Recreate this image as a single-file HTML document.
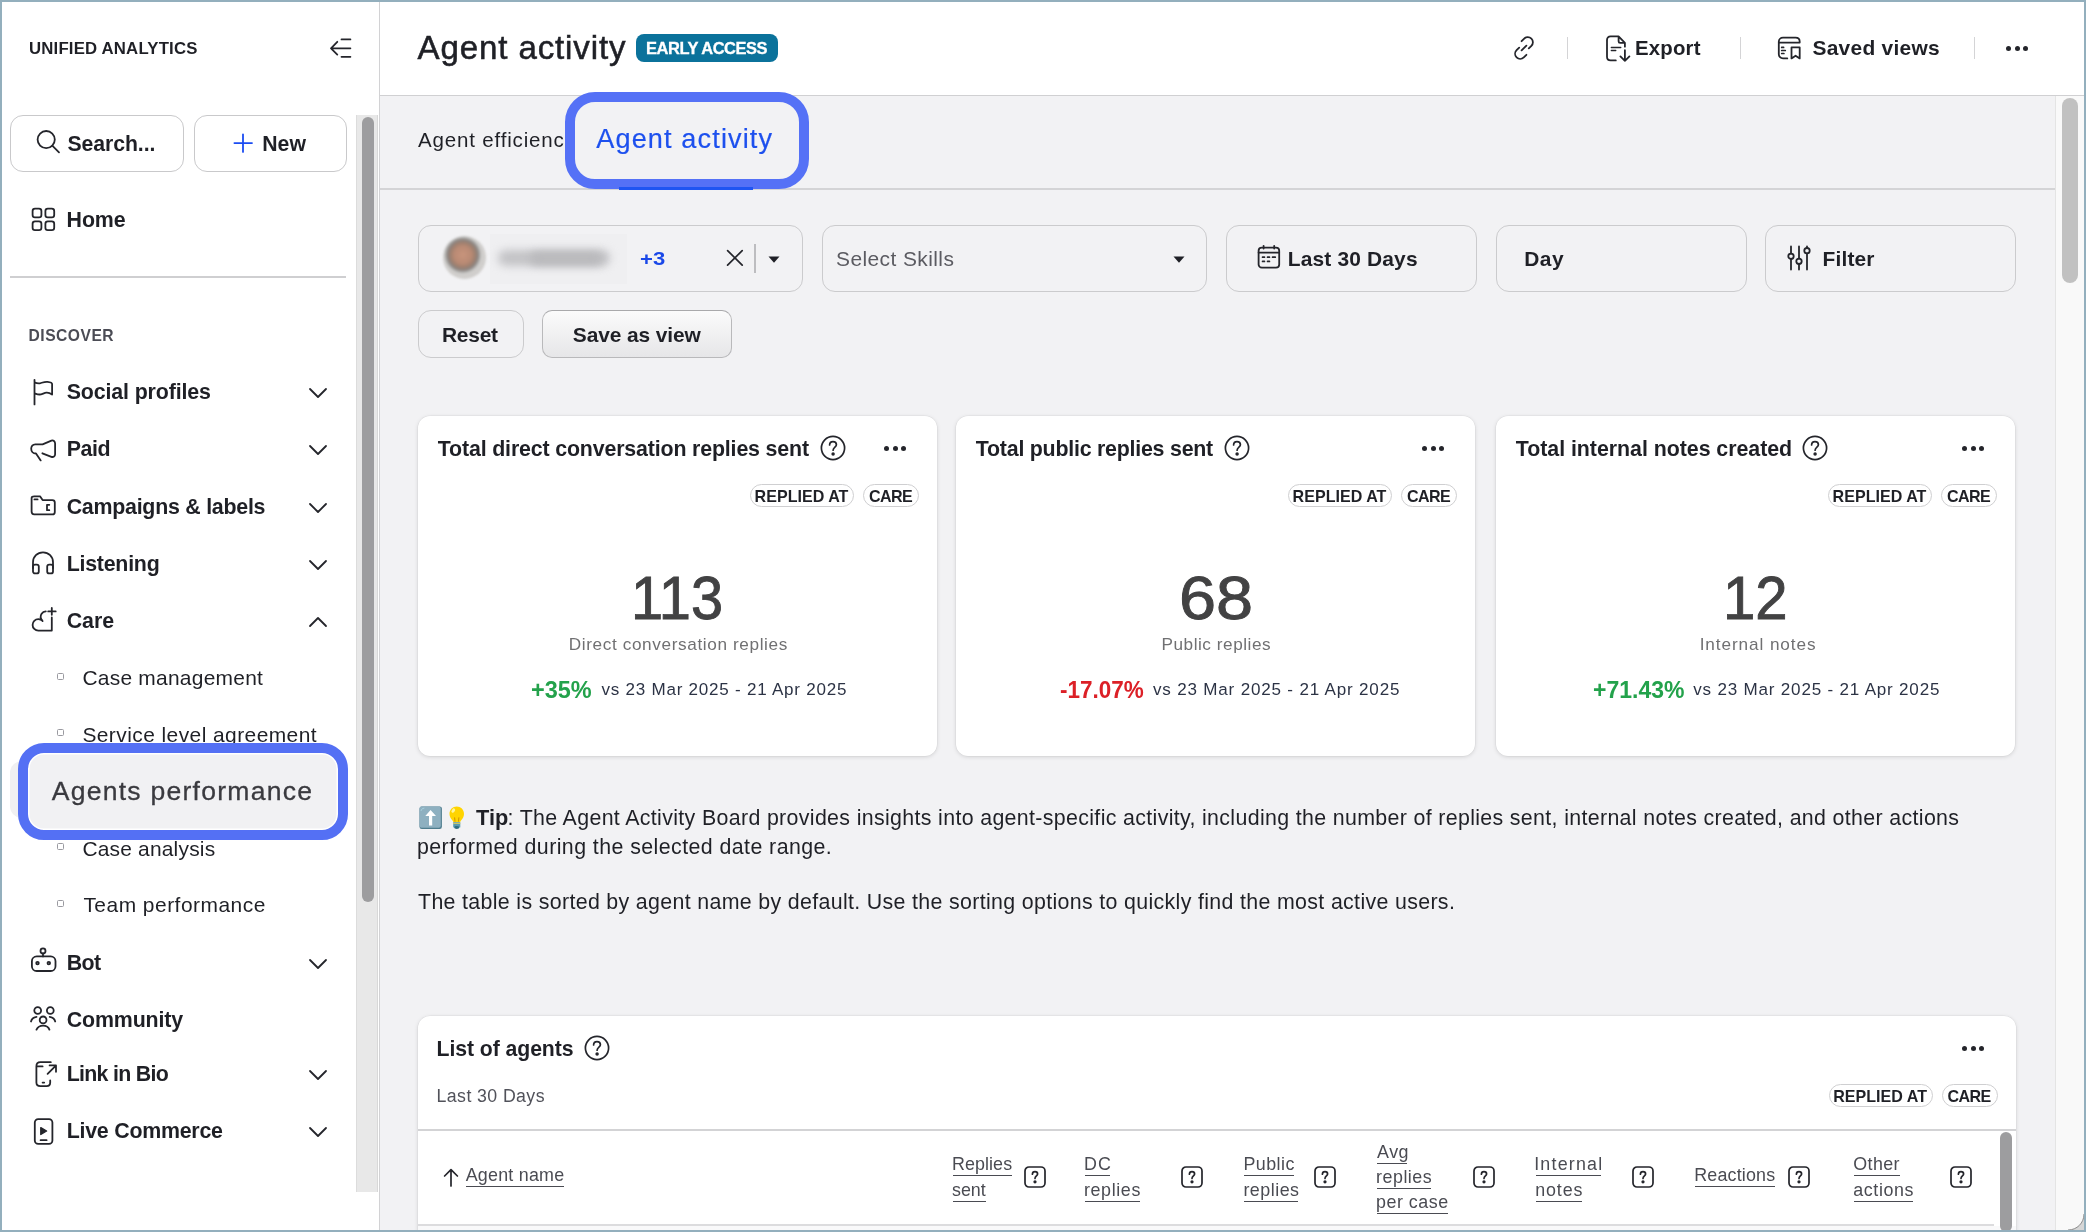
<!DOCTYPE html>
<html><head><meta charset="utf-8"><title>Agent activity</title>
<style>
html,body{margin:0;padding:0;width:2086px;height:1232px;overflow:hidden;background:#f2f2f4}
body{position:relative;font-family:"Liberation Sans", sans-serif}
.t{position:absolute;white-space:nowrap;font-family:"Liberation Sans", sans-serif}
.r{position:absolute;display:block}
</style></head><body><div style="position:absolute;left:0;top:0;width:2086px;height:1232px;will-change:transform">
<div class="r" style="left:0px;top:0px;width:2086px;height:1232px;background:#f2f2f4"></div>
<div class="r" style="left:2px;top:2px;width:377px;height:1228px;background:#fff"></div>
<div class="r" style="left:379px;top:2px;width:1px;height:1228px;background:#d2d2d4"></div>
<div class="r" style="left:380px;top:2px;width:1704px;height:93px;background:#fff"></div>
<div class="r" style="left:380px;top:95px;width:1704px;height:1px;background:#d0d0d2"></div>
<div class="r" style="left:380px;top:188px;width:1675px;height:1.5px;background:#d4d4d6"></div>
<div class="r" style="left:2055px;top:96px;width:29px;height:1134px;background:#f9f9f9;border-left:1px solid #e4e4e4"></div>
<div class="r" style="left:2062px;top:98px;width:16px;height:185px;background:#c1c1c1;border-radius:8px"></div>
<div id="s_title" class="t" style="left:29.00px;top:41.00px;font-size:16.76px;line-height:16.76px;font-weight:700;color:#1f2026;letter-spacing:0.188px;">UNIFIED ANALYTICS</div>
<svg class="r" style="left:328px;top:36px;" width="26" height="24" viewBox="0 0 26 24" fill="none" stroke="#24252b" stroke-width="1.8" stroke-linecap="round" stroke-linejoin="round"><path d="M3 12.3 L9.3 5.8 M3 12.3 L9.3 18.6 M3 12.3 H22.4 M13.5 3.4 H22.4 M13.5 20.8 H22.4"/></svg>
<div class="r" style="left:10px;top:115px;width:174px;height:57px;border:1.5px solid #c9c9cb;border-radius:13px;box-sizing:border-box;background:#fff"></div>
<div class="r" style="left:194px;top:115px;width:153px;height:57px;border:1.5px solid #c9c9cb;border-radius:13px;box-sizing:border-box;background:#fff"></div>
<svg class="r" style="left:34px;top:128px;" width="30" height="28" viewBox="0 0 30 28" fill="none" stroke="#24252b" stroke-width="1.8" stroke-linecap="round" stroke-linejoin="round"><circle cx="12.2" cy="11.6" r="8.6"/><path d="M18.3 17.7 L25 24.3"/></svg>
<div id="s_search" class="t" style="left:67.50px;top:133.00px;font-size:21.23px;line-height:21.23px;font-weight:700;color:#1f2026;letter-spacing:-0.075px;">Search...</div>
<svg class="r" style="left:232px;top:132px;stroke:#1b4cf2;" width="22" height="22" viewBox="0 0 22 22" fill="none" stroke="#24252b" stroke-width="1.8" stroke-linecap="round" stroke-linejoin="round"><path d="M11 2.3 V19.9 M2.4 11.1 H20"/></svg>
<div id="s_new" class="t" style="left:262.20px;top:133.00px;font-size:21.23px;line-height:21.23px;font-weight:700;color:#1f2026;letter-spacing:0.100px;">New</div>
<div class="r" style="left:356px;top:115px;width:22px;height:1077px;background:#e8e8e8;border-left:1px solid #dcdcdc;border-right:1px solid #d8d8d8;box-sizing:border-box"></div>
<div class="r" style="left:362px;top:117px;width:12px;height:785px;background:#9d9d9f;border-radius:6px"></div>
<svg class="r" style="left:30px;top:206px;" width="26" height="26" viewBox="0 0 26 26" fill="none" stroke="#24252b" stroke-width="1.8" stroke-linecap="round" stroke-linejoin="round"><rect x="2.6" y="2.6" width="8.8" height="8.8" rx="2.4"/><rect x="15.4" y="2.6" width="8.8" height="8.8" rx="2.4"/><rect x="2.6" y="15.4" width="8.8" height="8.8" rx="2.4"/><rect x="15.4" y="15.4" width="8.8" height="8.8" rx="2.4"/></svg>
<div id="s_home" class="t" style="left:66.60px;top:210.00px;font-size:21.37px;line-height:21.37px;font-weight:700;color:#1f2026;letter-spacing:-0.133px;">Home</div>
<div class="r" style="left:10px;top:276px;width:336px;height:2px;background:#cfcfd1"></div>
<div id="s_disc" class="t" style="left:28.50px;top:328.00px;font-size:15.64px;line-height:15.64px;font-weight:700;color:#4b4c55;letter-spacing:0.500px;">DISCOVER</div>
<div id="s_social" class="t" style="left:66.70px;top:382.00px;font-size:21.37px;line-height:21.37px;font-weight:700;color:#1f2026;letter-spacing:-0.129px;">Social profiles</div>
<svg class="r" style="left:306px;top:383px;" width="24" height="20" viewBox="0 0 24 20" fill="none" stroke="#24252b" stroke-width="1.8" stroke-linecap="round" stroke-linejoin="round"><path d="M4 6 L12 14 L20 6"/></svg>
<div id="s_paid" class="t" style="left:66.70px;top:439.00px;font-size:21.37px;line-height:21.37px;font-weight:700;color:#1f2026;letter-spacing:-0.433px;">Paid</div>
<svg class="r" style="left:306px;top:440.4px;" width="24" height="20" viewBox="0 0 24 20" fill="none" stroke="#24252b" stroke-width="1.8" stroke-linecap="round" stroke-linejoin="round"><path d="M4 6 L12 14 L20 6"/></svg>
<div id="s_camp" class="t" style="left:66.70px;top:497.00px;font-size:21.37px;line-height:21.37px;font-weight:700;color:#1f2026;letter-spacing:-0.247px;">Campaigns &amp; labels</div>
<svg class="r" style="left:306px;top:497.5px;" width="24" height="20" viewBox="0 0 24 20" fill="none" stroke="#24252b" stroke-width="1.8" stroke-linecap="round" stroke-linejoin="round"><path d="M4 6 L12 14 L20 6"/></svg>
<div id="s_listen" class="t" style="left:66.70px;top:554.00px;font-size:21.37px;line-height:21.37px;font-weight:700;color:#1f2026;letter-spacing:-0.238px;">Listening</div>
<svg class="r" style="left:306px;top:554.6px;" width="24" height="20" viewBox="0 0 24 20" fill="none" stroke="#24252b" stroke-width="1.8" stroke-linecap="round" stroke-linejoin="round"><path d="M4 6 L12 14 L20 6"/></svg>
<div id="s_care" class="t" style="left:66.70px;top:611.00px;font-size:21.37px;line-height:21.37px;font-weight:700;color:#1f2026;letter-spacing:0.000px;">Care</div>
<svg class="r" style="left:306px;top:611.7px;" width="24" height="20" viewBox="0 0 24 20" fill="none" stroke="#24252b" stroke-width="1.8" stroke-linecap="round" stroke-linejoin="round"><path d="M4 14 L12 6 L20 14"/></svg>
<div id="s_bot" class="t" style="left:66.70px;top:953.00px;font-size:21.37px;line-height:21.37px;font-weight:700;color:#1f2026;letter-spacing:-0.550px;">Bot</div>
<svg class="r" style="left:306px;top:953.8px;" width="24" height="20" viewBox="0 0 24 20" fill="none" stroke="#24252b" stroke-width="1.8" stroke-linecap="round" stroke-linejoin="round"><path d="M4 6 L12 14 L20 6"/></svg>
<div id="s_comm" class="t" style="left:66.70px;top:1010.00px;font-size:21.37px;line-height:21.37px;font-weight:700;color:#1f2026;letter-spacing:-0.125px;">Community</div>
<div id="s_link" class="t" style="left:66.70px;top:1064.00px;font-size:21.37px;line-height:21.37px;font-weight:700;color:#1f2026;letter-spacing:-0.700px;">Link in Bio</div>
<svg class="r" style="left:306px;top:1065.4px;" width="24" height="20" viewBox="0 0 24 20" fill="none" stroke="#24252b" stroke-width="1.8" stroke-linecap="round" stroke-linejoin="round"><path d="M4 6 L12 14 L20 6"/></svg>
<div id="s_live" class="t" style="left:66.70px;top:1121.00px;font-size:21.37px;line-height:21.37px;font-weight:700;color:#1f2026;letter-spacing:-0.233px;">Live Commerce</div>
<svg class="r" style="left:306px;top:1122px;" width="24" height="20" viewBox="0 0 24 20" fill="none" stroke="#24252b" stroke-width="1.8" stroke-linecap="round" stroke-linejoin="round"><path d="M4 6 L12 14 L20 6"/></svg>
<svg class="r" style="left:30px;top:377px;" width="26" height="30" viewBox="0 0 26 30" fill="none" stroke="#24252b" stroke-width="1.8" stroke-linecap="round" stroke-linejoin="round"><path d="M4.5 2.8 V27.4 M4.5 5.2 C6.5 6.2 8.5 6.6 10.5 6.1 C13 5.4 15 4.6 17.5 4.9 C20 5.2 22.1 5.8 22.1 7 V17.5 C20 16 18 15.5 16.5 15.6 C14 15.8 12 17.5 9.5 17.5 C7.5 17.5 6 16.8 4.5 16.3"/></svg>
<svg class="r" style="left:29px;top:437px;" width="28" height="26" viewBox="0 0 28 26" fill="none" stroke="#24252b" stroke-width="1.8" stroke-linecap="round" stroke-linejoin="round"><path d="M13.6 7.3 H6.3 C3.7 7.3 2.2 9.3 2.2 11.7 C2.2 14.2 4 16.5 7 16.5 L11.7 23.4 M13.4 16.3 L22.4 19.8 C24.4 20.5 26.1 19.3 26.1 17.2 V6.6 C26.1 4.4 24.4 3 22.4 3.6 L13.6 7.3"/></svg>
<svg class="r" style="left:29px;top:492px;" width="28" height="26" viewBox="0 0 28 26" fill="none" stroke="#24252b" stroke-width="1.8" stroke-linecap="round" stroke-linejoin="round"><path d="M2.6 6 V19.6 C2.6 21.3 3.6 22.4 5.2 22.4 H23.4 C24.9 22.4 25.8 21.4 25.8 19.9 V10.6 C25.8 9.1 24.9 8.1 23.4 8.1 H13.6 L11 4.3 H5.2 C3.6 4.3 2.6 5 2.6 6 Z M5.4 7.4 H8.6"/><path d="M20.3 12.8 H18 V18.2 H20.3"/></svg>
<svg class="r" style="left:30px;top:549px;" width="26" height="28" viewBox="0 0 26 28" fill="none" stroke="#24252b" stroke-width="1.8" stroke-linecap="round" stroke-linejoin="round"><path d="M3 19 V13.3 C3 7.6 7.4 3.4 13 3.4 C18.6 3.4 23 7.6 23 13.3 V19"/><rect x="3" y="15.6" width="5.8" height="8.8" rx="2"/><rect x="17.2" y="15.6" width="5.8" height="8.8" rx="2"/></svg>
<svg class="r" style="left:30px;top:600px;" width="28" height="34" viewBox="0 0 28 34" fill="none" stroke="#24252b" stroke-width="1.8" stroke-linecap="round" stroke-linejoin="round"><path d="M21.8 8 V14.8 M18.2 11.4 H25.7 M21.8 17.4 V30.6 H8.3 A5.7 5.7 0 0 1 8.3 19.2 C10 19.2 11.5 19.8 12.6 21 C10.6 19 10.2 16 11.6 13.8 C12.6 12.3 14 11.5 15.8 11.4"/></svg>
<div class="r" style="left:57px;top:673px;width:7px;height:7px;border:1px solid #9a9aa0;border-radius:1.5px;box-sizing:border-box"></div>
<div id="s_casem" class="t" style="left:82.40px;top:668.00px;font-size:20.95px;line-height:20.95px;font-weight:400;color:#1f2026;letter-spacing:0.257px;">Case management</div>
<div class="r" style="left:57px;top:729px;width:7px;height:7px;border:1px solid #9a9aa0;border-radius:1.5px;box-sizing:border-box"></div>
<div id="s_sla" class="t" style="left:82.40px;top:725.00px;font-size:20.95px;line-height:20.95px;font-weight:400;color:#1f2026;letter-spacing:0.436px;">Service level agreement</div>
<div class="r" style="left:57px;top:843px;width:7px;height:7px;border:1px solid #9a9aa0;border-radius:1.5px;box-sizing:border-box"></div>
<div id="s_casea" class="t" style="left:82.40px;top:839.00px;font-size:20.95px;line-height:20.95px;font-weight:400;color:#1f2026;letter-spacing:0.200px;">Case analysis</div>
<div class="r" style="left:57px;top:900px;width:7px;height:7px;border:1px solid #9a9aa0;border-radius:1.5px;box-sizing:border-box"></div>
<div id="s_team" class="t" style="left:83.40px;top:895.00px;font-size:20.95px;line-height:20.95px;font-weight:400;color:#1f2026;letter-spacing:0.493px;">Team performance</div>
<div class="r" style="left:10px;top:761px;width:330px;height:57px;background:#f0f0f2;border-radius:12px"></div>
<div class="r" style="left:18px;top:743px;width:330px;height:97px;border:10px solid #5470f4;border-radius:26px;box-sizing:border-box;background:#f1f1f3;box-shadow:inset 0 0 0 1.5px #fff"></div>
<div id="s_agents" class="t" style="left:51.80px;top:778.00px;font-size:26.54px;line-height:26.54px;font-weight:400;color:#3a3a3f;letter-spacing:1.247px;filter:blur(0.4px);-webkit-text-stroke:0.3px #3a3a3f;">Agents performance</div>
<svg class="r" style="left:29px;top:945px;" width="28" height="28" viewBox="0 0 28 28" fill="none" stroke="#24252b" stroke-width="1.8" stroke-linecap="round" stroke-linejoin="round"><circle cx="14" cy="5.9" r="2.5"/><path d="M14 8.4 V11.4"/><rect x="2.9" y="11.4" width="23.6" height="14.6" rx="4.8"/><circle cx="8.5" cy="18.1" r="1.3"/><circle cx="19.8" cy="18.1" r="1.3"/></svg>
<svg class="r" style="left:29px;top:1004px;" width="28" height="28" viewBox="0 0 28 28" fill="none" stroke="#24252b" stroke-width="1.8" stroke-linecap="round" stroke-linejoin="round"><circle cx="8.7" cy="6.5" r="3.4"/><circle cx="21.3" cy="6.5" r="3.4"/><circle cx="14.1" cy="15.9" r="3.4"/><path d="M2 17.5 C2.6 15.2 4.6 13.3 7.5 12.8 M26.2 17.5 C25.6 15.2 23.6 13.3 20.7 12.8 M7.5 25.6 C8.8 22.8 11.2 21.6 14.1 21.6 C17 21.6 19.4 22.8 20.4 25.6"/></svg>
<svg class="r" style="left:33px;top:1059px;" width="26" height="30" viewBox="0 0 26 30" fill="none" stroke="#24252b" stroke-width="1.8" stroke-linecap="round" stroke-linejoin="round"><path d="M17.8 3.2 H7.4 C5 3.2 3.4 4.8 3.4 7.2 V23.6 C3.4 26 5 27.2 7.4 27.2 H13.6 C16 27.2 17.2 26 17.2 23.6 V21.4 M3.4 7.4 H9.6 M9.6 23.6 H11.2 M14.6 14.8 L22.6 6.8 M16.6 6.4 H23 V12.8"/></svg>
<svg class="r" style="left:32px;top:1116px;" width="24" height="30" viewBox="0 0 24 30" fill="none" stroke="#24252b" stroke-width="1.8" stroke-linecap="round" stroke-linejoin="round"><rect x="2.8" y="3.2" width="17.6" height="24.6" rx="3.4"/><path d="M8.8 11.6 L14.6 15 L8.8 18.4 Z" fill="#24252b" stroke-width="1.4"/><path d="M8.6 24.2 H14.6"/></svg>
<div id="h_title" class="t" style="left:417.60px;top:31.00px;font-size:33.10px;line-height:33.10px;font-weight:400;color:#1f2026;letter-spacing:0.862px;-webkit-text-stroke:0.55px #1f2026;">Agent activity</div>
<div class="r" style="left:636px;top:34px;width:142px;height:27.5px;background:#0b729b;border-radius:8px"></div>
<div id="h_badge" class="t" style="left:646.00px;top:40.00px;font-size:16.48px;line-height:16.48px;font-weight:700;color:#fff;letter-spacing:-0.455px;-webkit-text-stroke:0.3px #fff;">EARLY ACCESS</div>
<svg class="r" style="left:1511px;top:35px;" width="26" height="26" viewBox="0 0 26 26" fill="none" stroke="#24252b" stroke-width="1.8" stroke-linecap="round" stroke-linejoin="round"><path d="M10.6 15.4 L15.4 10.6 M8.2 12.6 L5.6 15.2 C3.6 17.2 3.6 20.4 5.6 22.4 C7.6 24.4 10.8 24.4 12.8 22.4 L15.4 19.8 M17.8 13.4 L20.4 10.8 C22.4 8.8 22.4 5.6 20.4 3.6 C18.4 1.6 15.2 1.6 13.2 3.6 L10.6 6.2"/></svg>
<div class="r" style="left:1567px;top:37px;width:1.2px;height:22px;background:#d4d4d6"></div>
<svg class="r" style="left:1604px;top:34px;" width="30" height="30" viewBox="0 0 30 30" fill="none" stroke="#24252b" stroke-width="1.8" stroke-linecap="round" stroke-linejoin="round"><path d="M11.8 26.4 H6.6 C4.4 26.4 3 25 3 22.8 V6 C3 3.8 4.4 2.4 6.6 2.4 H14.6 L20.9 8.8 V12.7 M14.6 2.4 V7.2 C14.6 8.1 15.2 8.8 16.1 8.8 H20.9 M20.9 16.2 V26.8 M16.4 22.4 L20.9 26.9 L25.4 22.4"/><path d="M7.3 13.5 H16.8 M7.3 16.5 H11.8" stroke-width="1.3"/></svg>
<div id="h_export" class="t" style="left:1635.00px;top:38.00px;font-size:20.39px;line-height:20.39px;font-weight:700;color:#1f2026;letter-spacing:0.200px;">Export</div>
<div class="r" style="left:1740px;top:37px;width:1.2px;height:22px;background:#d4d4d6"></div>
<svg class="r" style="left:1776px;top:34px;" width="28" height="28" viewBox="0 0 28 28" fill="none" stroke="#24252b" stroke-width="1.8" stroke-linecap="round" stroke-linejoin="round"><path d="M11.3 24.4 H7 C4.6 24.4 2.8 22.6 2.8 20.2 V7.8 C2.8 5.4 4.6 3.7 7 3.7 H19.6 C22 3.7 23.7 5.4 23.7 7.8 V8.6 H2.8 M15.5 24.4 V13.4 H23.7 V24.4 L19.6 21.7 Z"/><path d="M5.7 13.4 H7.6 M5.7 16.5 H9.3 M5.7 19.5 H7.9" stroke-width="1.7"/></svg>
<div id="h_saved" class="t" style="left:1812.40px;top:38.00px;font-size:20.95px;line-height:20.95px;font-weight:700;color:#1f2026;letter-spacing:0.280px;">Saved views</div>
<div class="r" style="left:1974px;top:37px;width:1.2px;height:22px;background:#d4d4d6"></div>
<div class="r" style="left:2006.0px;top:45.7px;width:5px;height:5px;background:#24252b;border-radius:50%"></div>
<div class="r" style="left:2014.7px;top:45.7px;width:5px;height:5px;background:#24252b;border-radius:50%"></div>
<div class="r" style="left:2023.4px;top:45.7px;width:5px;height:5px;background:#24252b;border-radius:50%"></div>
<div id="t_eff" class="t" style="left:418.10px;top:130.00px;font-size:20.53px;line-height:20.53px;font-weight:400;color:#1f2026;letter-spacing:0.821px;">Agent efficienc</div>
<div class="r" style="left:565px;top:92px;width:244px;height:97px;border:10px solid #5571f6;border-radius:30px;box-sizing:border-box;background:#f2f2f4"></div>
<div class="r" style="left:619px;top:187px;width:134px;height:3px;background:#1f55f2"></div>
<div id="t_act" class="t" style="left:596.30px;top:125.00px;font-size:27.09px;line-height:27.09px;font-weight:400;color:#1d50ee;letter-spacing:1.131px;filter:blur(0.35px);-webkit-text-stroke:0.2px #1d50ee;">Agent activity</div>
<div class="r" style="left:418px;top:225px;width:385px;height:67px;border:1.5px solid #cbcbcd;border-radius:13px;box-sizing:border-box"></div>
<div class="r" style="left:822px;top:225px;width:385px;height:67px;border:1.5px solid #cbcbcd;border-radius:13px;box-sizing:border-box"></div>
<div class="r" style="left:1226px;top:225px;width:251px;height:67px;border:1.5px solid #cbcbcd;border-radius:13px;box-sizing:border-box"></div>
<div class="r" style="left:1496px;top:225px;width:251px;height:67px;border:1.5px solid #cbcbcd;border-radius:13px;box-sizing:border-box"></div>
<div class="r" style="left:1765px;top:225px;width:251px;height:67px;border:1.5px solid #cbcbcd;border-radius:13px;box-sizing:border-box"></div>
<div class="r" style="left:490px;top:234px;width:137px;height:50px;background:#efeff1"></div>
<div class="r" style="left:443px;top:236px;width:43px;height:43px;border-radius:50%;background:radial-gradient(circle closest-side at 46% 44%, #c8947c 0%, #b98a74 45%, #a0806f 64%, #8c8480 80%, #b4b4b2 92%, #d0cecc 100%);filter:blur(1.2px)"></div>
<div class="r" style="left:498px;top:250px;width:112px;height:16px;background:#c3c3c6;border-radius:8px;filter:blur(4.5px)"></div>
<div class="r" style="left:530px;top:252px;width:72px;height:13px;background:#b9b9bc;border-radius:6px;filter:blur(4px)"></div>
<div id="f_plus3" class="t" style="left:640.22px;top:250.00px;font-size:18.72px;line-height:18.72px;font-weight:700;color:#1a48e8;transform:scaleX(1.1800);transform-origin:0 0;">+3</div>
<svg class="r" style="left:724px;top:247px;stroke-width:1.7" width="22" height="22" viewBox="0 0 22 22" fill="none" stroke="#24252b" stroke-width="1.8" stroke-linecap="round" stroke-linejoin="round"><path d="M3.6 3.6 L18.2 18.2 M18.2 3.6 L3.6 18.2"/></svg>
<div class="r" style="left:754px;top:244px;width:1.5px;height:29px;background:#bdbdc0"></div>
<svg class="r" style="left:767px;top:255px" width="14" height="9" viewBox="0 0 14 9"><path d="M1.5 1.5 H12.5 L7 7.8 Z" fill="#1f2026"/></svg>
<div id="f_skills" class="t" style="left:836.00px;top:249.00px;font-size:20.95px;line-height:20.95px;font-weight:400;color:#5b5b61;letter-spacing:0.417px;">Select Skills</div>
<svg class="r" style="left:1172px;top:255px" width="14" height="9" viewBox="0 0 14 9"><path d="M1.5 1.5 H12.5 L7 7.8 Z" fill="#1f2026"/></svg>
<svg class="r" style="left:1256px;top:244px;" width="26" height="26" viewBox="0 0 26 26" fill="none" stroke="#24252b" stroke-width="1.8" stroke-linecap="round" stroke-linejoin="round"><rect x="2.6" y="3.6" width="20.6" height="20" rx="3.2"/><path d="M2.6 8.6 H23.2 M7.6 1.8 V4.6 M18.2 1.8 V4.6 M6.6 13.2 H8.4 M11.6 13.2 H13.4 M16.6 13.2 H19.2 M6.6 17.4 H8.4 M11.6 17.4 H13.4"/></svg>
<div id="f_last30" class="t" style="left:1287.80px;top:249.00px;font-size:20.95px;line-height:20.95px;font-weight:700;color:#1f2026;letter-spacing:0.155px;">Last 30 Days</div>
<div id="f_day" class="t" style="left:1524.30px;top:249.00px;font-size:20.95px;line-height:20.95px;font-weight:700;color:#1f2026;letter-spacing:0.450px;">Day</div>
<svg class="r" style="left:1786px;top:244px;" width="26" height="28" viewBox="0 0 26 28" fill="none" stroke="#24252b" stroke-width="1.8" stroke-linecap="round" stroke-linejoin="round"><path d="M5 2.5 V9.6 M5 15 V25.5 M13 2.5 V14.6 M13 20 V25.5 M21 2.5 V4 M21 9.4 V25.5"/><circle cx="5" cy="12.3" r="2.7"/><circle cx="13" cy="17.3" r="2.7"/><circle cx="21" cy="6.7" r="2.7"/></svg>
<div id="f_filter" class="t" style="left:1822.60px;top:249.00px;font-size:20.95px;line-height:20.95px;font-weight:700;color:#1f2026;letter-spacing:0.120px;">Filter</div>
<div class="r" style="left:418px;top:310px;width:106px;height:48px;border:1.5px solid #cbcbcd;border-radius:13px;box-sizing:border-box"></div>
<div id="b_reset" class="t" style="left:442.00px;top:325.00px;font-size:20.95px;line-height:20.95px;font-weight:700;color:#1f2026;letter-spacing:-0.250px;">Reset</div>
<div class="r" style="left:542px;top:310px;width:190px;height:48px;border:1.5px solid #b9b9bb;border-top-color:#a9a9ab;border-radius:10px;box-sizing:border-box;background:linear-gradient(#fbfbfb,#e6e6e8)"></div>
<div id="b_save" class="t" style="left:572.80px;top:325.00px;font-size:20.95px;line-height:20.95px;font-weight:700;color:#1f2026;letter-spacing:-0.118px;">Save as view</div>
<div class="r" style="left:418px;top:415.5px;width:519px;height:340.5px;background:#fff;border-radius:12px;box-shadow:0 0 0 0.5px rgba(0,0,0,0.05),0 1px 4px rgba(0,0,0,0.13)"></div>
<div id="k_title0" class="t" style="left:437.80px;top:439.00px;font-size:21.37px;line-height:21.37px;font-weight:700;color:#1f2026;letter-spacing:-0.157px;">Total direct conversation replies sent</div>
<svg class="r" style="left:820.0px;top:435px;stroke-width:1.7;" width="26" height="26" viewBox="0 0 26 26" fill="none" stroke="#24252b" stroke-width="1.8" stroke-linecap="round" stroke-linejoin="round"><circle cx="13" cy="13" r="11.6"/><path d="M9.6 10 C9.6 7.9 11.1 6.6 13 6.6 C14.9 6.6 16.4 7.9 16.4 9.8 C16.4 11.9 13.1 12.4 13.1 15.2"/><circle cx="13.1" cy="19" r="0.9" fill="#24252b"/></svg>
<div class="r" style="left:883.8px;top:445.5px;width:5px;height:5px;background:#24252b;border-radius:50%"></div>
<div class="r" style="left:892.5px;top:445.5px;width:5px;height:5px;background:#24252b;border-radius:50%"></div>
<div class="r" style="left:901.2px;top:445.5px;width:5px;height:5px;background:#24252b;border-radius:50%"></div>
<div class="r" style="left:750px;top:484.2px;width:104px;height:23px;border:1px solid #cfcfd1;border-radius:12px;box-sizing:border-box;background:#fff"></div>
<div id="c_rep_7500" class="t" style="left:754.60px;top:488.00px;font-size:16.06px;line-height:16.06px;font-weight:700;color:#1f2026;letter-spacing:0.022px;">REPLIED AT</div>
<div class="r" style="left:863px;top:484.2px;width:56px;height:23px;border:1px solid #cfcfd1;border-radius:12px;box-sizing:border-box;background:#fff"></div>
<div id="c_care_7500" class="t" style="left:868.90px;top:488.00px;font-size:16.06px;line-height:16.06px;font-weight:700;color:#1f2026;letter-spacing:-0.567px;">CARE</div>
<div id="k_num0" class="t" style="left:631.07px;top:568.00px;font-size:60.34px;line-height:60.34px;font-weight:400;color:#424243;transform:scaleX(0.9584);transform-origin:0 0;-webkit-text-stroke:0.9px #424243;">113</div>
<div id="k_lab0" class="t" style="left:568.70px;top:636.00px;font-size:17.18px;line-height:17.18px;font-weight:400;color:#707072;letter-spacing:0.627px;">Direct conversation replies</div>
<div id="k_pct0" class="t" style="left:530.75px;top:678.00px;font-size:24.58px;line-height:24.58px;font-weight:700;color:#23a24b;transform:scaleX(0.9548);transform-origin:0 0;">+35%</div>
<div id="k_vs0" class="t" style="left:601.50px;top:681.00px;font-size:17.04px;line-height:17.04px;font-weight:400;color:#2c3345;letter-spacing:0.759px;">vs 23 Mar 2025 - 21 Apr 2025</div>
<div class="r" style="left:956px;top:415.5px;width:519px;height:340.5px;background:#fff;border-radius:12px;box-shadow:0 0 0 0.5px rgba(0,0,0,0.05),0 1px 4px rgba(0,0,0,0.13)"></div>
<div id="k_title1" class="t" style="left:975.80px;top:439.00px;font-size:21.37px;line-height:21.37px;font-weight:700;color:#1f2026;letter-spacing:-0.229px;">Total public replies sent</div>
<svg class="r" style="left:1224.3px;top:435px;stroke-width:1.7;" width="26" height="26" viewBox="0 0 26 26" fill="none" stroke="#24252b" stroke-width="1.8" stroke-linecap="round" stroke-linejoin="round"><circle cx="13" cy="13" r="11.6"/><path d="M9.6 10 C9.6 7.9 11.1 6.6 13 6.6 C14.9 6.6 16.4 7.9 16.4 9.8 C16.4 11.9 13.1 12.4 13.1 15.2"/><circle cx="13.1" cy="19" r="0.9" fill="#24252b"/></svg>
<div class="r" style="left:1421.8px;top:445.5px;width:5px;height:5px;background:#24252b;border-radius:50%"></div>
<div class="r" style="left:1430.5px;top:445.5px;width:5px;height:5px;background:#24252b;border-radius:50%"></div>
<div class="r" style="left:1439.2px;top:445.5px;width:5px;height:5px;background:#24252b;border-radius:50%"></div>
<div class="r" style="left:1288px;top:484.2px;width:104px;height:23px;border:1px solid #cfcfd1;border-radius:12px;box-sizing:border-box;background:#fff"></div>
<div id="c_rep_12880" class="t" style="left:1292.60px;top:488.00px;font-size:16.06px;line-height:16.06px;font-weight:700;color:#1f2026;letter-spacing:0.022px;">REPLIED AT</div>
<div class="r" style="left:1401px;top:484.2px;width:56px;height:23px;border:1px solid #cfcfd1;border-radius:12px;box-sizing:border-box;background:#fff"></div>
<div id="c_care_12880" class="t" style="left:1406.90px;top:488.00px;font-size:16.06px;line-height:16.06px;font-weight:700;color:#1f2026;letter-spacing:-0.567px;">CARE</div>
<div id="k_num1" class="t" style="left:1178.69px;top:568.00px;font-size:60.34px;line-height:60.34px;font-weight:400;color:#424243;transform:scaleX(1.1048);transform-origin:0 0;-webkit-text-stroke:0.9px #424243;">68</div>
<div id="k_lab1" class="t" style="left:1161.50px;top:636.00px;font-size:17.18px;line-height:17.18px;font-weight:400;color:#707072;letter-spacing:0.538px;">Public replies</div>
<div id="k_pct1" class="t" style="left:1060.09px;top:678.00px;font-size:24.58px;line-height:24.58px;font-weight:700;color:#dc2027;transform:scaleX(0.9144);transform-origin:0 0;">-17.07%</div>
<div id="k_vs1" class="t" style="left:1153.00px;top:681.00px;font-size:17.04px;line-height:17.04px;font-weight:400;color:#2c3345;letter-spacing:0.815px;">vs 23 Mar 2025 - 21 Apr 2025</div>
<div class="r" style="left:1496px;top:415.5px;width:519px;height:340.5px;background:#fff;border-radius:12px;box-shadow:0 0 0 0.5px rgba(0,0,0,0.05),0 1px 4px rgba(0,0,0,0.13)"></div>
<div id="k_title2" class="t" style="left:1515.80px;top:439.00px;font-size:21.37px;line-height:21.37px;font-weight:700;color:#1f2026;letter-spacing:-0.037px;">Total internal notes created</div>
<svg class="r" style="left:1801.8px;top:435px;stroke-width:1.7;" width="26" height="26" viewBox="0 0 26 26" fill="none" stroke="#24252b" stroke-width="1.8" stroke-linecap="round" stroke-linejoin="round"><circle cx="13" cy="13" r="11.6"/><path d="M9.6 10 C9.6 7.9 11.1 6.6 13 6.6 C14.9 6.6 16.4 7.9 16.4 9.8 C16.4 11.9 13.1 12.4 13.1 15.2"/><circle cx="13.1" cy="19" r="0.9" fill="#24252b"/></svg>
<div class="r" style="left:1961.8px;top:445.5px;width:5px;height:5px;background:#24252b;border-radius:50%"></div>
<div class="r" style="left:1970.5px;top:445.5px;width:5px;height:5px;background:#24252b;border-radius:50%"></div>
<div class="r" style="left:1979.2px;top:445.5px;width:5px;height:5px;background:#24252b;border-radius:50%"></div>
<div class="r" style="left:1828px;top:484.2px;width:104px;height:23px;border:1px solid #cfcfd1;border-radius:12px;box-sizing:border-box;background:#fff"></div>
<div id="c_rep_18280" class="t" style="left:1832.60px;top:488.00px;font-size:16.06px;line-height:16.06px;font-weight:700;color:#1f2026;letter-spacing:0.022px;">REPLIED AT</div>
<div class="r" style="left:1941px;top:484.2px;width:56px;height:23px;border:1px solid #cfcfd1;border-radius:12px;box-sizing:border-box;background:#fff"></div>
<div id="c_care_18280" class="t" style="left:1946.90px;top:488.00px;font-size:16.06px;line-height:16.06px;font-weight:700;color:#1f2026;letter-spacing:-0.567px;">CARE</div>
<div id="k_num2" class="t" style="left:1723.15px;top:568.00px;font-size:60.34px;line-height:60.34px;font-weight:400;color:#424243;transform:scaleX(0.9633);transform-origin:0 0;-webkit-text-stroke:0.9px #424243;">12</div>
<div id="k_lab2" class="t" style="left:1699.70px;top:636.00px;font-size:17.18px;line-height:17.18px;font-weight:400;color:#707072;letter-spacing:0.908px;">Internal notes</div>
<div id="k_pct2" class="t" style="left:1592.56px;top:678.00px;font-size:24.58px;line-height:24.58px;font-weight:700;color:#23a24b;transform:scaleX(0.9354);transform-origin:0 0;">+71.43%</div>
<div id="k_vs2" class="t" style="left:1693.30px;top:681.00px;font-size:17.04px;line-height:17.04px;font-weight:400;color:#2c3345;letter-spacing:0.804px;">vs 23 Mar 2025 - 21 Apr 2025</div>
<svg class="r" style="left:419px;top:806px" width="24" height="24" viewBox="0 0 24 24"><rect x="0.5" y="0.5" width="22.4" height="22.4" rx="2.2" fill="#4f7d8e"/><rect x="0.5" y="0.5" width="21.3" height="21.2" rx="2" fill="#8eb0c0"/><path d="M2 5 C2.3 3.3 3.2 2.4 5.4 2.1" stroke="#a8cfdc" stroke-width="1" fill="none"/><path d="M11.6 3.9 L17 9.9 H13.2 V19.6 H10 V9.9 H6.3 Z" fill="#fff"/></svg>
<svg class="r" style="left:447px;top:806px" width="19" height="24" viewBox="0 0 19 24"><path d="M9.75 0.6 C5.7 0.6 2.5 3.8 2.5 7.9 C2.5 10.6 3.8 12.4 5.3 14.2 C5.9 15 6.2 15.6 6.3 16.2 H13.2 C13.3 15.6 13.6 15 14.2 14.2 C15.7 12.4 17 10.6 17 7.9 C17 3.8 13.8 0.6 9.75 0.6 Z" fill="#ffd400"/><ellipse cx="6.3" cy="4.6" rx="1.5" ry="2.4" transform="rotate(35 6.3 4.6)" fill="#fff59a"/><path d="M8 15.6 L7.6 11.4 M11.5 15.6 L11.9 11.4" stroke="#c98a00" stroke-width="0.9" fill="none"/><rect x="6.2" y="16.2" width="7.1" height="5.2" fill="#5a9bb0"/><rect x="6.2" y="16.9" width="7.1" height="0.9" fill="#e3cf5a"/><ellipse cx="9.75" cy="21.5" rx="2.6" ry="1.4" fill="#2f6d80"/></svg>
<div id="tip_b" class="t" style="left:475.70px;top:808.00px;font-size:21.37px;line-height:21.37px;font-weight:700;color:#1f2026;transform:scaleX(1.0194);transform-origin:0 0;">Tip</div>
<div id="tip_l1" class="t" style="left:507.50px;top:808.00px;font-size:21.37px;line-height:21.37px;font-weight:400;color:#1f2026;letter-spacing:0.343px;">: The Agent Activity Board provides insights into agent-specific activity, including the number of replies sent, internal notes created, and other actions</div>
<div id="tip_l2" class="t" style="left:417.00px;top:837.00px;font-size:21.37px;line-height:21.37px;font-weight:400;color:#1f2026;letter-spacing:0.425px;">performed during the selected date range.</div>
<div id="tip_l3" class="t" style="left:418.00px;top:892.00px;font-size:21.37px;line-height:21.37px;font-weight:400;color:#1f2026;letter-spacing:0.336px;">The table is sorted by agent name by default. Use the sorting options to quickly find the most active users.</div>
<div class="r" style="left:418px;top:1016px;width:1598px;height:230px;background:#fff;border-radius:12px;box-shadow:0 0 0 0.5px rgba(0,0,0,0.05),0 1px 4px rgba(0,0,0,0.13)"></div>
<div id="l_title" class="t" style="left:436.60px;top:1038.00px;font-size:21.23px;line-height:21.23px;font-weight:700;color:#1f2026;letter-spacing:-0.077px;">List of agents</div>
<svg class="r" style="left:584px;top:1035px;stroke-width:1.7;" width="26" height="26" viewBox="0 0 26 26" fill="none" stroke="#24252b" stroke-width="1.8" stroke-linecap="round" stroke-linejoin="round"><circle cx="13" cy="13" r="11.6"/><path d="M9.6 10 C9.6 7.9 11.1 6.6 13 6.6 C14.9 6.6 16.4 7.9 16.4 9.8 C16.4 11.9 13.1 12.4 13.1 15.2"/><circle cx="13.1" cy="19" r="0.9" fill="#24252b"/></svg>
<div class="r" style="left:1961.8px;top:1045.5px;width:5px;height:5px;background:#24252b;border-radius:50%"></div>
<div class="r" style="left:1970.5px;top:1045.5px;width:5px;height:5px;background:#24252b;border-radius:50%"></div>
<div class="r" style="left:1979.2px;top:1045.5px;width:5px;height:5px;background:#24252b;border-radius:50%"></div>
<div class="r" style="left:1828.6px;top:1084.2px;width:104px;height:23px;border:1px solid #cfcfd1;border-radius:12px;box-sizing:border-box;background:#fff"></div>
<div id="c_rep_18286" class="t" style="left:1833.20px;top:1088.00px;font-size:16.06px;line-height:16.06px;font-weight:700;color:#1f2026;letter-spacing:0.022px;">REPLIED AT</div>
<div class="r" style="left:1941.6px;top:1084.2px;width:56px;height:23px;border:1px solid #cfcfd1;border-radius:12px;box-sizing:border-box;background:#fff"></div>
<div id="c_care_18286" class="t" style="left:1947.50px;top:1088.00px;font-size:16.06px;line-height:16.06px;font-weight:700;color:#1f2026;letter-spacing:-0.567px;">CARE</div>
<div id="l_last" class="t" style="left:436.60px;top:1088.00px;font-size:17.74px;line-height:17.74px;font-weight:400;color:#51525a;letter-spacing:0.400px;">Last 30 Days</div>
<div class="r" style="left:418px;top:1129px;width:1598px;height:1.5px;background:#d3d3d5"></div>
<div class="r" style="left:418px;top:1224px;width:1576px;height:1.5px;background:#dcdcde"></div>
<div class="r" style="left:418px;top:1226px;width:1598px;height:6px;background:#f9f9fa"></div>
<div class="r" style="left:2000px;top:1132px;width:12px;height:100px;background:#9d9d9f;border-radius:6px"></div>
<div class="r" style="left:1996px;top:1130px;width:20px;height:100px;background:transparent"></div>
<svg class="r" style="left:440px;top:1166px;stroke-width:1.7;" width="22" height="22" viewBox="0 0 22 22" fill="none" stroke="#24252b" stroke-width="1.8" stroke-linecap="round" stroke-linejoin="round"><path d="M11 20 V3.6 M4.6 10 L11 3.6 L17.4 10"/></svg>
<div id="th_agent" class="t" style="left:465.70px;top:1167.00px;font-size:17.88px;line-height:17.88px;font-weight:400;color:#4a4b52;letter-spacing:0.233px;">Agent name</div>
<div class="r" style="left:465.7px;top:1185.6px;width:98.1px;height:1.3px;background:#4a4b52"></div>
<div id="th0_0" class="t" style="left:952.00px;top:1156.00px;font-size:17.88px;line-height:17.88px;font-weight:400;color:#4a4b52;letter-spacing:0.083px;">Replies</div>
<div class="r" style="left:953px;top:1174.6px;width:58.5px;height:1.3px;background:#4a4b52"></div>
<div id="th0_1" class="t" style="left:952.00px;top:1182.00px;font-size:17.88px;line-height:17.88px;font-weight:400;color:#4a4b52;letter-spacing:0.000px;">sent</div>
<div class="r" style="left:953px;top:1200.6px;width:33px;height:1.3px;background:#4a4b52"></div>
<svg class="r" style="left:1023px;top:1165px;stroke-width:1.7;" width="24" height="24" viewBox="0 0 24 24" fill="none" stroke="#24252b" stroke-width="1.8" stroke-linecap="round" stroke-linejoin="round"><rect x="2" y="2" width="20" height="20" rx="4"/><path d="M9.4 9.2 C9.4 7.6 10.6 6.6 12 6.6 C13.4 6.6 14.6 7.6 14.6 9 C14.6 10.8 12 11.1 12 13.4"/><circle cx="12" cy="16.8" r="0.8" fill="#24252b"/></svg>
<div id="th1_0" class="t" style="left:1084.00px;top:1156.00px;font-size:17.88px;line-height:17.88px;font-weight:400;color:#4a4b52;letter-spacing:1.000px;">DC</div>
<div class="r" style="left:1085px;top:1174.6px;width:25px;height:1.3px;background:#4a4b52"></div>
<div id="th1_1" class="t" style="left:1084.00px;top:1182.00px;font-size:17.88px;line-height:17.88px;font-weight:400;color:#4a4b52;letter-spacing:0.617px;">replies</div>
<div class="r" style="left:1085px;top:1200.6px;width:54.7px;height:1.3px;background:#4a4b52"></div>
<svg class="r" style="left:1180px;top:1165px;stroke-width:1.7;" width="24" height="24" viewBox="0 0 24 24" fill="none" stroke="#24252b" stroke-width="1.8" stroke-linecap="round" stroke-linejoin="round"><rect x="2" y="2" width="20" height="20" rx="4"/><path d="M9.4 9.2 C9.4 7.6 10.6 6.6 12 6.6 C13.4 6.6 14.6 7.6 14.6 9 C14.6 10.8 12 11.1 12 13.4"/><circle cx="12" cy="16.8" r="0.8" fill="#24252b"/></svg>
<div id="th2_0" class="t" style="left:1243.40px;top:1156.00px;font-size:17.88px;line-height:17.88px;font-weight:400;color:#4a4b52;letter-spacing:0.480px;">Public</div>
<div class="r" style="left:1244.4px;top:1174.6px;width:49.4px;height:1.3px;background:#4a4b52"></div>
<div id="th2_1" class="t" style="left:1243.40px;top:1182.00px;font-size:17.88px;line-height:17.88px;font-weight:400;color:#4a4b52;letter-spacing:0.500px;">replies</div>
<div class="r" style="left:1244.4px;top:1200.6px;width:54px;height:1.3px;background:#4a4b52"></div>
<svg class="r" style="left:1312.5px;top:1165px;stroke-width:1.7;" width="24" height="24" viewBox="0 0 24 24" fill="none" stroke="#24252b" stroke-width="1.8" stroke-linecap="round" stroke-linejoin="round"><rect x="2" y="2" width="20" height="20" rx="4"/><path d="M9.4 9.2 C9.4 7.6 10.6 6.6 12 6.6 C13.4 6.6 14.6 7.6 14.6 9 C14.6 10.8 12 11.1 12 13.4"/><circle cx="12" cy="16.8" r="0.8" fill="#24252b"/></svg>
<div id="th3_0" class="t" style="left:1377.10px;top:1144.00px;font-size:17.88px;line-height:17.88px;font-weight:400;color:#4a4b52;letter-spacing:0.500px;">Avg</div>
<div class="r" style="left:1377.1px;top:1162.6px;width:30px;height:1.3px;background:#4a4b52"></div>
<div id="th3_1" class="t" style="left:1376.10px;top:1169.00px;font-size:17.88px;line-height:17.88px;font-weight:400;color:#4a4b52;letter-spacing:0.500px;">replies</div>
<div class="r" style="left:1377.1px;top:1187.6px;width:54px;height:1.3px;background:#4a4b52"></div>
<div id="th3_2" class="t" style="left:1376.10px;top:1194.00px;font-size:17.88px;line-height:17.88px;font-weight:400;color:#4a4b52;letter-spacing:0.500px;">per case</div>
<div class="r" style="left:1377.1px;top:1212.6px;width:70.5px;height:1.3px;background:#4a4b52"></div>
<svg class="r" style="left:1472.3px;top:1165px;stroke-width:1.7;" width="24" height="24" viewBox="0 0 24 24" fill="none" stroke="#24252b" stroke-width="1.8" stroke-linecap="round" stroke-linejoin="round"><rect x="2" y="2" width="20" height="20" rx="4"/><path d="M9.4 9.2 C9.4 7.6 10.6 6.6 12 6.6 C13.4 6.6 14.6 7.6 14.6 9 C14.6 10.8 12 11.1 12 13.4"/><circle cx="12" cy="16.8" r="0.8" fill="#24252b"/></svg>
<div id="th4_0" class="t" style="left:1534.20px;top:1156.00px;font-size:17.88px;line-height:17.88px;font-weight:400;color:#4a4b52;letter-spacing:1.200px;">Internal</div>
<div class="r" style="left:1536.2px;top:1174.6px;width:64.4px;height:1.3px;background:#4a4b52"></div>
<div id="th4_1" class="t" style="left:1535.20px;top:1182.00px;font-size:17.88px;line-height:17.88px;font-weight:400;color:#4a4b52;letter-spacing:0.900px;">notes</div>
<div class="r" style="left:1536.2px;top:1200.6px;width:45.6px;height:1.3px;background:#4a4b52"></div>
<svg class="r" style="left:1631.4px;top:1165px;stroke-width:1.7;" width="24" height="24" viewBox="0 0 24 24" fill="none" stroke="#24252b" stroke-width="1.8" stroke-linecap="round" stroke-linejoin="round"><rect x="2" y="2" width="20" height="20" rx="4"/><path d="M9.4 9.2 C9.4 7.6 10.6 6.6 12 6.6 C13.4 6.6 14.6 7.6 14.6 9 C14.6 10.8 12 11.1 12 13.4"/><circle cx="12" cy="16.8" r="0.8" fill="#24252b"/></svg>
<div id="th5_0" class="t" style="left:1694.20px;top:1167.00px;font-size:17.88px;line-height:17.88px;font-weight:400;color:#4a4b52;letter-spacing:0.188px;">Reactions</div>
<div class="r" style="left:1695.2px;top:1185.6px;width:79.5px;height:1.3px;background:#4a4b52"></div>
<svg class="r" style="left:1787px;top:1165px;stroke-width:1.7;" width="24" height="24" viewBox="0 0 24 24" fill="none" stroke="#24252b" stroke-width="1.8" stroke-linecap="round" stroke-linejoin="round"><rect x="2" y="2" width="20" height="20" rx="4"/><path d="M9.4 9.2 C9.4 7.6 10.6 6.6 12 6.6 C13.4 6.6 14.6 7.6 14.6 9 C14.6 10.8 12 11.1 12 13.4"/><circle cx="12" cy="16.8" r="0.8" fill="#24252b"/></svg>
<div id="th6_0" class="t" style="left:1853.30px;top:1156.00px;font-size:17.88px;line-height:17.88px;font-weight:400;color:#4a4b52;letter-spacing:0.400px;">Other</div>
<div class="r" style="left:1854.3px;top:1174.6px;width:45.6px;height:1.3px;background:#4a4b52"></div>
<div id="th6_1" class="t" style="left:1853.30px;top:1182.00px;font-size:17.88px;line-height:17.88px;font-weight:400;color:#4a4b52;letter-spacing:0.600px;">actions</div>
<div class="r" style="left:1854.3px;top:1200.6px;width:58.6px;height:1.3px;background:#4a4b52"></div>
<svg class="r" style="left:1949.4px;top:1165px;stroke-width:1.7;" width="24" height="24" viewBox="0 0 24 24" fill="none" stroke="#24252b" stroke-width="1.8" stroke-linecap="round" stroke-linejoin="round"><rect x="2" y="2" width="20" height="20" rx="4"/><path d="M9.4 9.2 C9.4 7.6 10.6 6.6 12 6.6 C13.4 6.6 14.6 7.6 14.6 9 C14.6 10.8 12 11.1 12 13.4"/><circle cx="12" cy="16.8" r="0.8" fill="#24252b"/></svg>
<div class="r" style="left:0px;top:0px;width:2086px;height:2px;background:#93afbd"></div>
<div class="r" style="left:0px;top:0px;width:2px;height:1232px;background:#93afbd"></div>
<div class="r" style="left:2084px;top:0px;width:2px;height:1232px;background:#93afbd"></div>
<div class="r" style="left:0px;top:1230px;width:2086px;height:2px;background:#93afbd"></div>
<svg class="r" style="left:2068px;top:1214px" width="16" height="16" viewBox="0 0 16 16"><path d="M16 0 V16 H0 C9 16 16 9 16 0 Z" fill="#d6d6d6"/><path d="M16 0 C16 9 9 16 0 16" stroke="#8a8a8a" stroke-width="1" fill="none"/></svg>
</div></body></html>
